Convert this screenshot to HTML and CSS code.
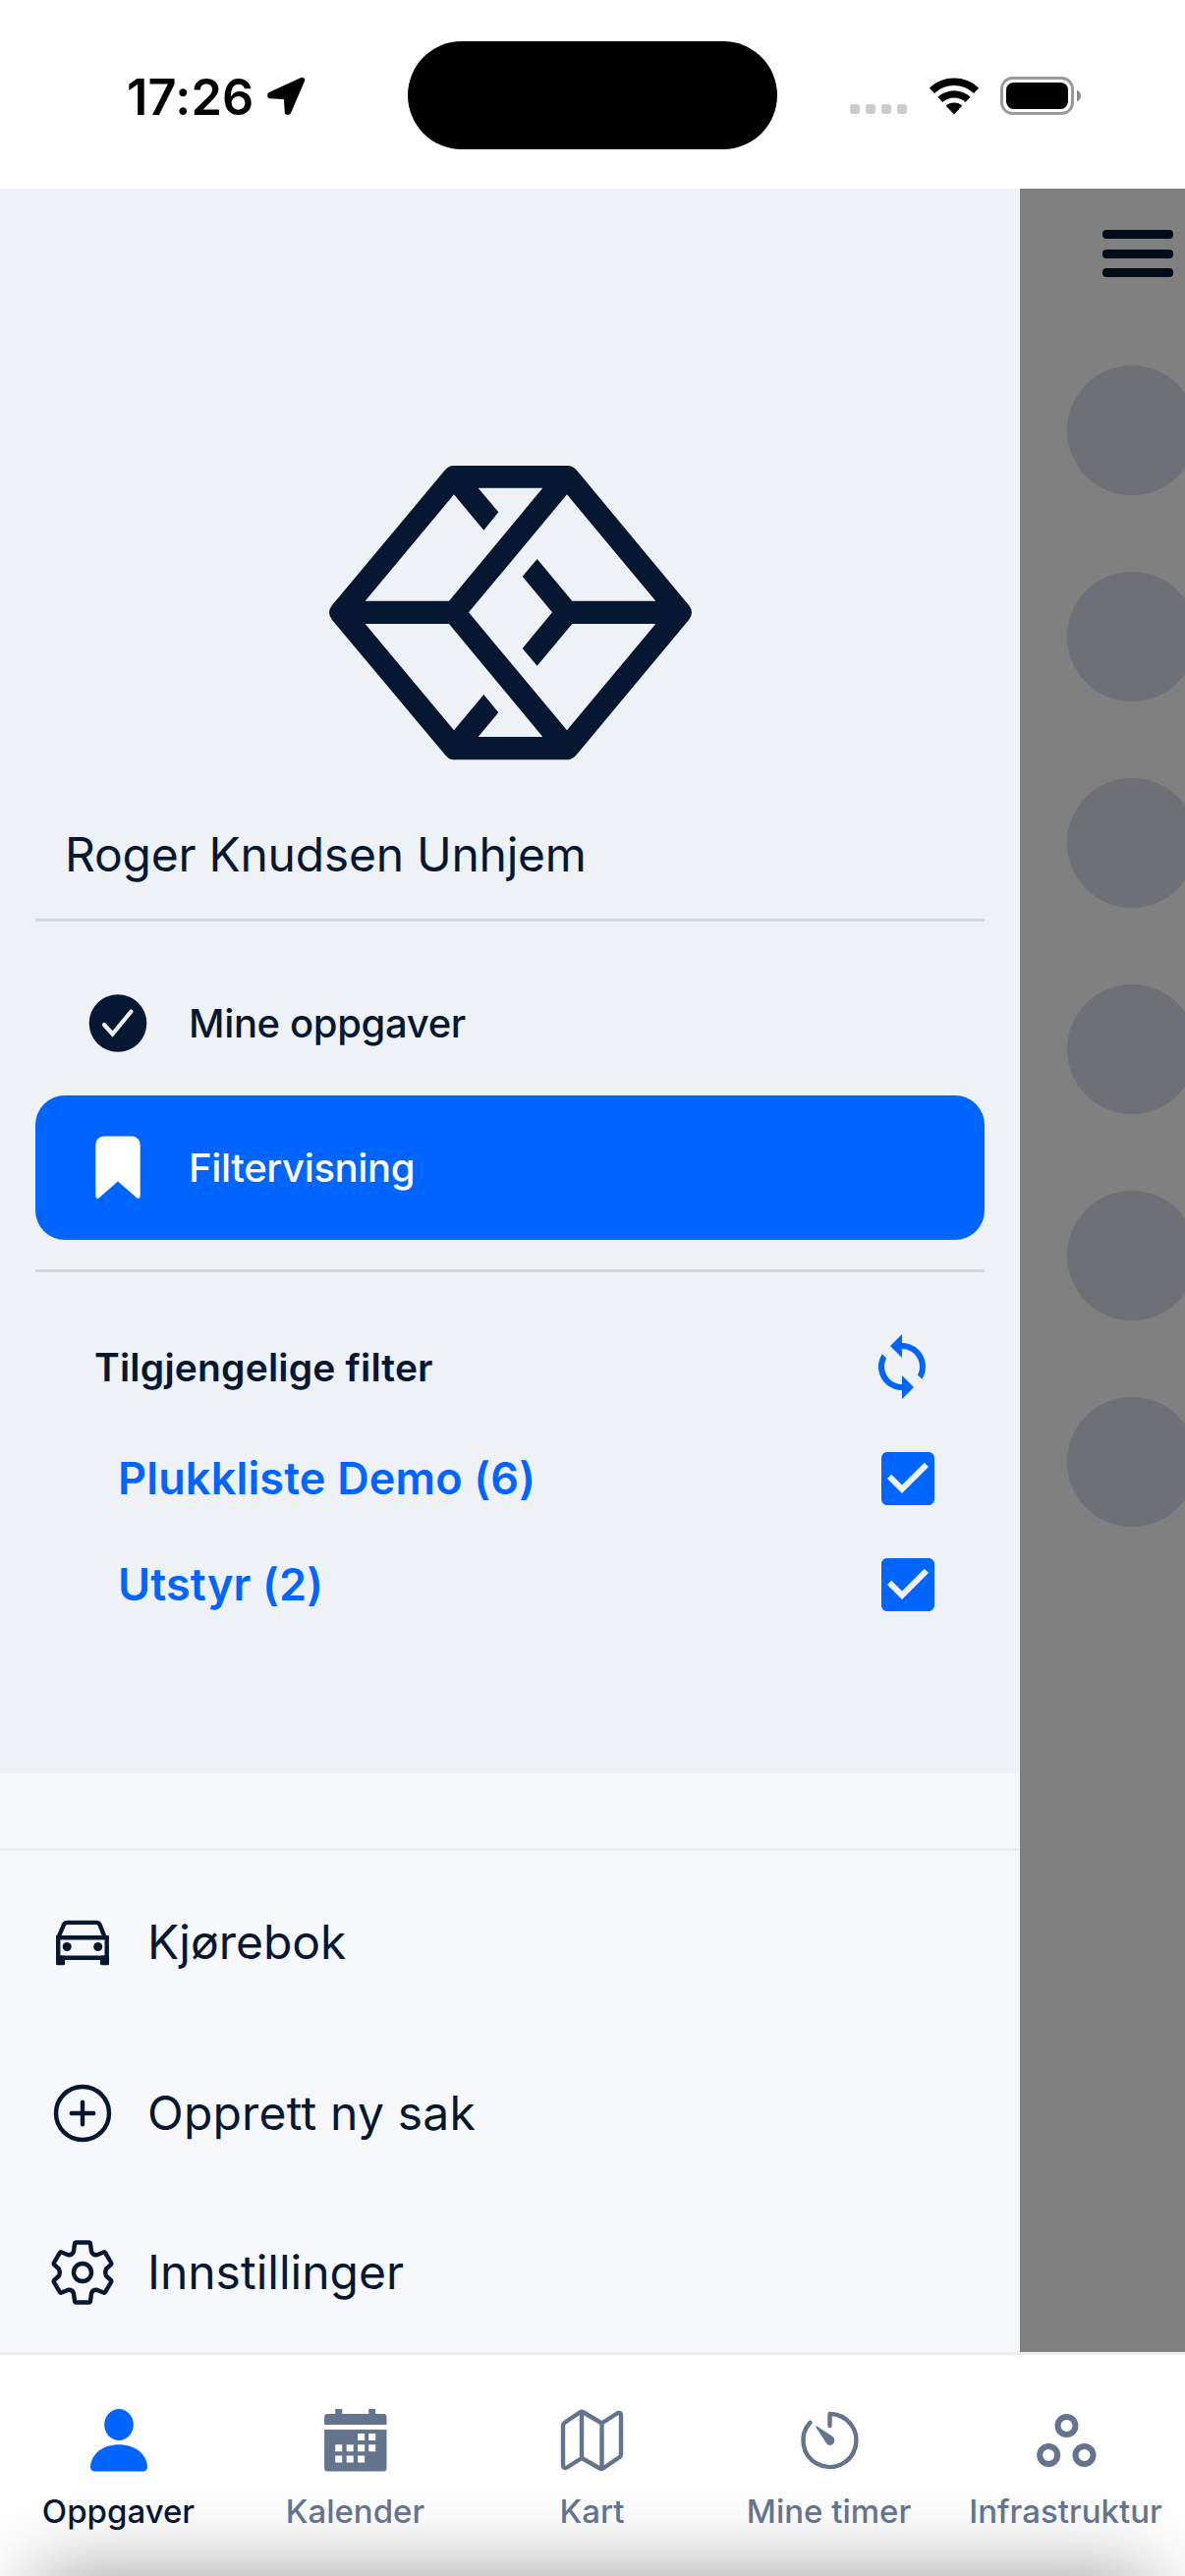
FILE: index.html
```html
<!DOCTYPE html>
<html lang="no">
<head>
    <meta charset="UTF-8">
    <meta name="viewport" content="width=device-width, initial-scale=1.0">
    <title>Oppgaver</title>
    <link rel="stylesheet" href="styles.css">
</head>
<body>
    <!-- Status bar -->
    <header class="status-bar">
        <div class="status-left">
            <span class="time">17:26</span>
            <svg class="location" viewBox="0 0 40 40"><path d="M36.5 3.5L4 18.5V19.5L20.5 20.5L21.5 36H22.5Z" fill="#000" stroke="#000" stroke-width="5.5" stroke-linejoin="round"/></svg>
        </div>
        <div class="island"></div>
        <div class="status-right">
            <div class="signal"><i></i><i></i><i></i><i></i></div>
            <svg class="wifi" viewBox="0 0 52 38">
                <path d="M3.4 13.2A33.2 33.2 0 0 1 48.6 13.2M11.9 22.4A20.7 20.7 0 0 1 40.1 22.4" fill="none" stroke="#000" stroke-width="7.4"/>
                <path d="M26 37.5L17.8 28.7A12 12 0 0 1 34.2 28.7Z"/>
            </svg>
            <svg class="battery" viewBox="0 0 82 39">
                <rect x="1.5" y="1.5" width="72" height="36" rx="11" fill="none" stroke="#9a9a9a" stroke-width="3"/>
                <rect x="6" y="6" width="63" height="27" rx="7.5"/>
                <path d="M78 13.5Q82 15.5 82 19.5T78 25.5Z" fill="#8c8c8c"/>
            </svg>
        </div>
    </header>

    <main class="screen">
        <!-- Drawer -->
        <aside class="drawer">
            <section class="profile">
                <svg class="logo" viewBox="0 0 1260 1050">
                    <path fill-rule="evenodd" d="M455 72H803Q818 72 830 85L1173 498Q1191 520 1173 543L830 955Q818 970 803 970H455Q440 970 429 955L84 543Q66 520 84 498L429 85Q440 72 455 72Z
                        M456 160L547 269L592 214L530 140H727L441 485H185Z
                        M456 880L547 771L592 826L530 900H727L441 555H185Z
                        M801 160L1072 485H817L710 357L665 410L756 520L665 630L710 683L817 555H1072L801 880L501 520Z"/>
                </svg>
                <div class="name"><span>Roger Knudsen Unhjem</span></div>

                <nav class="views">
                    <a class="view">
                        <svg class="icon" viewBox="0 0 72 72">
                            <circle cx="36" cy="35.5" r="29.3" fill="#061831"/>
                            <path d="M22 37L30.5 46.5L49.5 23.5" fill="none" stroke="#eef1f6" stroke-width="4.2" stroke-linecap="round"/>
                        </svg>
                        <span>Mine oppgaver</span>
                    </a>
                    <a class="view active">
                        <svg class="icon" viewBox="0 0 72 72"><path d="M23 3.5H49Q58.700 3.5 58.700 13V64.5Q58.5 68 55.5 66.5L36 49.5L16.5 66.5Q13.5 68 13.3 64.5V13Q13.3 3.5 23 3.5Z" fill="#fff"/></svg>
                        <span>Filtervisning</span>
                    </a>
                </nav>

                <div class="filters">
                    <div class="filter-head">
                        <h2>Tilgjengelige filter</h2>
                        <svg class="icon" viewBox="0 0 24 24"><path d="M12 4V1L8 5l4 4V6c3.31 0 6 2.69 6 6 0 1.01-.25 1.97-.7 2.8l1.46 1.46C19.54 15.03 20 13.57 20 12c0-4.42-3.58-8-8-8zm0 14c-3.31 0-6-2.69-6-6 0-1.01.25-1.97.7-2.8L5.24 7.74C4.46 8.97 4 10.43 4 12c0 4.42 3.58 8 8 8v3l4-4-4-4v3z"/></svg>
                    </div>
                    <div class="filter">
                        <span>Plukkliste Demo (6)</span>
                        <svg class="icon" viewBox="0 0 24 24"><path d="M19 3H5c-1.11 0-2 .9-2 2v14c0 1.1.89 2 2 2h14c1.11 0 2-.9 2-2V5c0-1.1-.89-2-2-2zm-9 14l-5-5 1.41-1.41L10 14.17l7.59-7.59L19 8l-9 9z"/></svg>
                    </div>
                    <div class="filter">
                        <span>Utstyr (2)</span>
                        <svg class="icon" viewBox="0 0 24 24"><path d="M19 3H5c-1.11 0-2 .9-2 2v14c0 1.1.89 2 2 2h14c1.11 0 2-.9 2-2V5c0-1.1-.89-2-2-2zm-9 14l-5-5 1.41-1.41L10 14.17l7.59-7.59L19 8l-9 9z"/></svg>
                    </div>
                </div>
            </section>

            <nav class="menu">
                <a class="menu-item first">
                    <svg class="icon" viewBox="0 0 72 72">
                        <g fill="none" stroke="#061831" stroke-width="4.4">
                            <path d="M11.2 31.5L17 18Q18 15.9 20.5 15.9H50Q52.5 15.9 53.5 18L58.9 31.5"/>
                            <path d="M11.2 31.2H60.7V51.7H11.2Z"/>
                        </g>
                        <g fill="#061831">
                            <circle cx="20.2" cy="40.5" r="4.5"/>
                            <circle cx="51.7" cy="40.5" r="4.5"/>
                            <rect x="9" y="49.5" width="9" height="9.8" rx="1.5"/>
                            <rect x="54" y="49.5" width="9" height="9.8" rx="1.5"/>
                        </g>
                    </svg>
                    <span>Kjørebok</span>
                </a>
                <a class="menu-item">
                    <svg class="icon line" viewBox="0 0 72 72"><circle cx="36" cy="36" r="27"/><path d="M36 24.8V47.2M24.8 36H47.2"/></svg>
                    <span class="wide">Opprett ny sak</span>
                </a>
                <a class="menu-item">
                    <svg class="icon line" viewBox="0 0 72 72">
                        <path d="M29.5 5.5H42.5Q43.7 5.5 44 7L45 14.5Q46 18.5 50.5 18.3L57.2 15.5Q58.5 15 59.2 16.2L65 26Q65.7 27.2 64.8 28.2L60 32.5Q58.5 36 60 39.5L64.8 43.8Q65.7 44.8 65 46L59.2 55.8Q58.5 57 57.2 56.5L50.5 53.7Q46 53.5 45 57.5L44 65Q43.7 66.5 42.5 66.5H29.5Q28.3 66.5 28 65L27 57.5Q26 53.5 21.5 53.7L14.8 56.5Q13.5 57 12.8 55.8L7 46Q6.3 44.8 7.2 43.8L12 39.5Q13.5 36 12 32.5L7.2 28.2Q6.3 27.2 7 26L12.8 16.2Q13.5 15 14.8 15.5L21.5 18.3Q26 18.5 27 14.5L28 7Q28.3 5.5 29.5 5.5Z"/>
                        <circle cx="36" cy="36" r="9"/>
                    </svg>
                    <span>Innstillinger</span>
                </a>
            </nav>
        </aside>

        <!-- Dimmed page behind the drawer -->
        <div class="backdrop">
            <div class="hamburger"><i></i><i></i><i></i></div>
            <div class="avatars"><b></b><b></b><b></b><b></b><b></b><b></b></div>
        </div>
    </main>

    <!-- Tab bar -->
    <footer class="tabs">
        <a class="tab current">
            <svg class="icon" viewBox="0 0 72 72" fill="#0065ff"><ellipse cx="36" cy="20" rx="14.8" ry="16"/><path d="M7 62.5C8 49 20.5 40.2 36 40.2S64 49 65 62.5Q65 67.5 60.5 67.5H11.5Q7 67.5 7 62.5Z"/></svg>
            <span>Oppgaver</span>
        </a>
        <a class="tab">
            <svg class="icon" viewBox="0 0 72 72">
                <path d="M15.2 4H22.3V9H49.2V4H56.1V9H64.5Q67.5 9 67.5 12V20H4.1V12Q4.1 9 7.1 9H15.2ZM4.1 25H67.5V64.5Q67.5 67.5 64.5 67.5H7.1Q4.1 67.5 4.1 64.5Z" fill="#64748f"/>
                <path d="M38.1 29h7v7h-7zM49.2 29h7v7h-7zM15.2 40.3h7v7h-7zM26.7 40.3h7v7h-7zM38.1 40.3h7v7h-7zM49.2 40.3h7v7h-7zM15.2 51.5h7v7h-7zM26.7 51.5h7v7h-7zM38.1 51.5h7v7h-7z" fill="#fff"/>
            </svg>
            <span>Kalender</span>
        </a>
        <a class="tab">
            <svg class="icon line" viewBox="0 0 72 72"><path d="M6 21Q6 19 7.5 18L23 7.5Q25 6 27 7.5L45.5 18.5L61 8.5Q65 6.5 65 11V50Q65 52 63.5 53L47.5 64Q45.5 65.5 43.5 64.5L25 54L10 63.5Q6 65 6 61ZM25 7V54M45.5 18.5V64"/></svg>
            <span>Kart</span>
        </a>
        <a class="tab">
            <svg class="icon line" viewBox="0 0 72 72"><path d="M36.5 21V9A27 27 0 1 1 16.5 17.8"/><path d="M22.3 22.5Q22 21 23.5 21.5L39.3 32Q42 34.5 41 38Q39 42 35.5 40.8Q33.5 40 32.5 38Z" fill="#64748f" stroke="none"/></svg>
            <span>Mine timer</span>
        </a>
        <a class="tab">
            <svg class="icon" viewBox="0 0 72 72" fill="none" stroke="#64748f" stroke-width="6"><circle cx="36.500" cy="21" r="9"/><circle cx="18.2" cy="51" r="9"/><circle cx="54.5" cy="51" r="9"/></svg>
            <span>Infrastruktur</span>
        </a>
    </footer>
</body>
</html>
```
FILE: styles.css
```css
* {
    box-sizing: border-box;
}
body {
    margin: 0;
    width: 1206px;
    height: 2622px;
    display: flex;
    flex-direction: column;
    overflow: hidden;
    background: #fff;
    color: #061831;
    font-family: Inter, "Liberation Sans", sans-serif;
}
span, h2 {
    white-space: nowrap;
}
.icon {
    width: 72px;
    height: 72px;
    flex: none;
    display: block;
}
.line {
    fill: none;
    stroke: #061831;
    stroke-width: 4.4;
    stroke-linecap: round;
    stroke-linejoin: round;
}

/* Status bar */
.status-bar {
    height: 192px;
    flex: none;
    display: grid;
    grid-template-columns: 415px 376px 415px;
    color: #000;
}
.status-left {
    display: flex;
    align-items: center;
    height: 196px;
    padding-left: 129px;
}
.time {
    width: 142px;
    font-size: 50.5px;
    font-weight: 600;
    letter-spacing: 0.2px;
}
.location {
    width: 40px;
    height: 40px;
}
.island {
    height: 110px;
    margin-top: 42px;
    border-radius: 55px;
    background: #000;
}
.status-right {
    display: flex;
    align-items: flex-start;
    padding: 78px 0 0 74px;
}
.signal {
    display: flex;
    gap: 6px;
    margin: 28px 22px 0 0;
}
.signal i {
    width: 10px;
    height: 10px;
    border-radius: 3px;
    background: #ccc;
}
.wifi {
    width: 52px;
    height: 38px;
    margin: 1px 21px 0 0;
}
.battery {
    width: 82px;
    height: 39px;
}

/* Drawer */
.screen {
    height: 2202px;
    flex: none;
    display: flex;
}
.drawer {
    width: 1038px;
    flex: none;
    display: flex;
    flex-direction: column;
    background: #f7f8fc;
}
.profile {
    height: 1613px;
    padding: 258px 36px 0;
    background: #eef1f6;
}
.logo {
    display: block;
    width: 420px;
    height: 350px;
    margin: 0 auto 0 274px;
    fill: #061831;
}
.name {
    display: flex;
    align-items: center;
    height: 138px;
    padding: 3px 0 0 30px;
    border-bottom: 3px solid #d2d7e2;
    font-size: 48px;
    letter-spacing: -0.25px;
}
.views {
    padding: 30px 0;
    border-bottom: 3px solid #d2d7e2;
}
.view {
    display: flex;
    align-items: center;
    gap: 36px;
    height: 147px;
    padding-left: 48px;
    border-radius: 30px;
    font-size: 40px;
    font-weight: 500;
    letter-spacing: -0.35px;
}
.active {
    background: #0065ff;
    color: #fff;
}
.filters {
    padding: 60px 42px 0 60px;
}
.filter-head {
    display: flex;
    align-items: center;
    justify-content: space-between;
    height: 72px;
    margin-bottom: 24px;
    padding-right: 6px;
}
.filter-head h2 {
    margin: 0;
    font-size: 39px;
    font-weight: 600;
    letter-spacing: 0.17px;
}
.filters .icon {
    fill: #0065ff;
}
.filter {
    display: flex;
    align-items: center;
    justify-content: space-between;
    height: 108px;
    padding-left: 24px;
    color: #0065ff;
    font-size: 45px;
    font-weight: 600;
    letter-spacing: 0.17px;
}
.filter span, .menu-item span {
    padding-bottom: 2px;
}
.menu {
    margin-top: 76px;
    border-top: 3px solid #eee;
}
.menu-item {
    display: flex;
    align-items: center;
    gap: 30px;
    height: 162px;
    padding-left: 48px;
    font-size: 48px;
}
.first {
    height: 186px;
}
.wide {
    letter-spacing: 0.2px;
}

/* Dimmed page */
.backdrop {
    flex: 1;
    overflow: hidden;
    background: #808080;
}
.hamburger {
    display: flex;
    flex-direction: column;
    justify-content: space-between;
    width: 72px;
    height: 48px;
    margin: 42px 0 0 84px;
}
.hamburger i {
    height: 9px;
    border-radius: 4px;
    background: #020c18;
}
.avatars {
    display: flex;
    flex-direction: column;
    gap: 78px;
    padding: 90px 0 0 48px;
}
.avatars b {
    width: 132px;
    height: 132px;
    border-radius: 50%;
    background: #6f7075;
}

/* Tab bar */
.tabs {
    position: relative;
    flex: 1;
    display: grid;
    grid-template-columns: repeat(5, 1fr);
    padding: 51px 1px 0 0;
    border-top: 3px solid #eee;
    overflow: hidden;
}
.tabs::before {
    content: "";
    position: absolute;
    left: 36px;
    right: 36px;
    top: 100%;
    height: 200px;
    box-shadow: 0 0 84px rgba(0, 0, 0, 0.4);
}
.tab {
    position: relative;
    display: flex;
    flex-direction: column;
    align-items: center;
    gap: 16px;
    color: #64748f;
    font-size: 33px;
    font-weight: 500;
    line-height: 40px;
}
.tab .line {
    stroke: #64748f;
}
.current {
    color: #061831;
}
```
